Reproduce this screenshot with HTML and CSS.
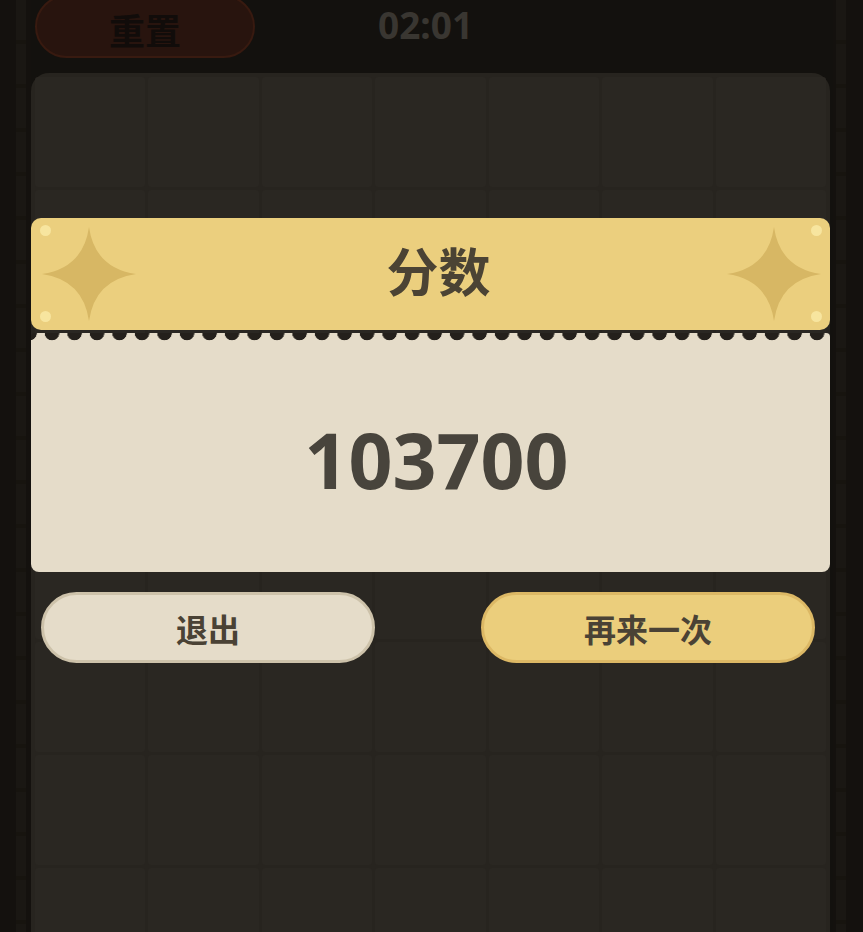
FILE: index.html
```html
<!DOCTYPE html>
<html lang="zh-CN">
<head>
<meta charset="utf-8">
<title>分数</title>
<link rel="stylesheet" href="styles.css">
</head>
<body>
<div class="screen">
  <div class="rail rail-left"><div class="track"></div></div>

  <main class="main">
    <header class="topbar">
      <button class="reset-btn">重置</button>
      <div class="timer">02:01</div>
    </header>

    <section class="board">
      <div class="cell"></div><div class="cell"></div><div class="cell"></div><div class="cell"></div><div class="cell"></div><div class="cell"></div><div class="cell"></div>
      <div class="cell"></div><div class="cell"></div><div class="cell"></div><div class="cell"></div><div class="cell"></div><div class="cell"></div><div class="cell"></div>
      <div class="cell"></div><div class="cell"></div><div class="cell"></div><div class="cell"></div><div class="cell"></div><div class="cell"></div><div class="cell"></div>
      <div class="cell"></div><div class="cell"></div><div class="cell"></div><div class="cell"></div><div class="cell"></div><div class="cell"></div><div class="cell"></div>
      <div class="cell"></div><div class="cell"></div><div class="cell"></div><div class="cell"></div><div class="cell"></div><div class="cell"></div><div class="cell"></div>
      <div class="cell"></div><div class="cell"></div><div class="cell"></div><div class="cell"></div><div class="cell"></div><div class="cell"></div><div class="cell"></div>
      <div class="cell"></div><div class="cell"></div><div class="cell"></div><div class="cell"></div><div class="cell"></div><div class="cell"></div><div class="cell"></div>
      <div class="cell"></div><div class="cell"></div><div class="cell"></div><div class="cell"></div><div class="cell"></div><div class="cell"></div><div class="cell"></div>
    </section>

    <!-- game-over dialog over the board -->
    <div class="score-modal">
      <div class="score-head">
        <span class="rivet rivet-tl"></span>
        <span class="rivet rivet-bl"></span>
        <span class="rivet rivet-tr"></span>
        <span class="rivet rivet-br"></span>
        <svg class="sparkle" viewBox="0 0 100 100" aria-hidden="true">
          <path d="M50 2 Q56 44 98 50 Q56 56 50 98 Q44 56 2 50 Q44 44 50 2Z"/>
        </svg>
        <h1 class="score-title">分数</h1>
        <svg class="sparkle" viewBox="0 0 100 100" aria-hidden="true">
          <path d="M50 2 Q56 44 98 50 Q56 56 50 98 Q44 56 2 50 Q44 44 50 2Z"/>
        </svg>
      </div>
      <div class="score-body">
        <div class="score-value">103700</div>
      </div>
      <div class="actions">
        <button class="pill pill-cream">退出</button>
        <button class="pill pill-gold">再来一次</button>
      </div>
    </div>
  </main>

  <div class="rail rail-right"><div class="track"></div></div>
</div>
</body>
</html>
```

FILE: styles.css
```css
* {
  box-sizing: border-box;
}

html, body {
  margin: 0;
  padding: 0;
  height: 932px;
  overflow: hidden;
  background: #13110e;
  font-family: "Noto Sans", "Noto Sans CJK SC", sans-serif;
}

.screen {
  display: flex;
  height: 932px;
}

/* side rails */
.rail {
  flex: 0 0 auto;
  background: #14110e;
  display: flex;
}

.rail-left {
  width: 31px;
  justify-content: flex-end;
  padding-right: 5px;
}

.rail-right {
  width: 30px;
  padding-left: 3px;
}

.track {
  width: 10px;
  background: repeating-linear-gradient(180deg, #1a1713 0 40px, #17140f 40px 44px);
}

/* middle column */
.main {
  position: relative;
  width: 802px;
  flex: 0 0 auto;
}

.topbar {
  height: 73px;
  display: flex;
  align-items: flex-start;
}

.reset-btn {
  margin: -5px 0 0 4px;
  width: 220px;
  height: 63px;
  border-radius: 32px;
  background: #28140e;
  border: 2px solid #381a10;
  color: #110c0a;
  font: 700 36px "Noto Sans CJK SC", sans-serif;
  line-height: 1;
  padding: 4px 0 0;
}

.timer {
  margin: 6px 0 0 123px;
  color: #393631;
  font: 700 37px "Noto Sans", sans-serif;
  line-height: 37px;
}

.board {
  width: 799px;
  border-radius: 18px;
  background: #27241f;
  padding: 4px;
  display: grid;
  grid-template-columns: repeat(7, 1fr);
  grid-auto-rows: 110px;
  gap: 3px;
}

.cell {
  background: #2a2722;
  border-radius: 3px;
}

/* dialog */
.score-modal {
  position: absolute;
  left: 0;
  top: 218px;
  width: 799px;
}

.score-head {
  position: relative;
  height: 112px;
  background: #ebcf7e;
  border-radius: 10px;
  display: flex;
  align-items: center;
  justify-content: space-between;
  padding: 0 7px 0 9px;
}

.sparkle {
  width: 98px;
  height: 98px;
  fill: #d7b764;
}

.score-title {
  margin: -8px 0 0 14px;
  color: #4b4334;
  font: 700 52px "Noto Sans CJK SC", sans-serif;
  line-height: 1;
}

.rivet {
  position: absolute;
  width: 11px;
  height: 11px;
  border-radius: 50%;
  background: #f7e59f;
}

.rivet-tl { left: 9px; top: 7px; }
.rivet-bl { left: 9px; bottom: 8px; }
.rivet-tr { right: 8px; top: 7px; }
.rivet-br { right: 8px; bottom: 8px; }

.score-body {
  margin-top: 3px;
  height: 239px;
  border-radius: 4px 4px 8px 8px;
  background:
    radial-gradient(circle at 11px 0, #24201b 7px, rgba(36, 32, 27, 0) 7.6px) 10px 0 / 22.5px 10px repeat-x,
    #e5dcc9;
  display: flex;
  align-items: center;
  justify-content: center;
}

.score-value {
  color: #48443c;
  font: 700 77px "Noto Sans", sans-serif;
  line-height: 1;
  padding: 14px 0 0 12px;
}

.actions {
  margin-top: 20px;
  display: flex;
  justify-content: space-between;
  padding: 0 15px 0 10px;
}

.pill {
  width: 334px;
  height: 71px;
  border-radius: 36px;
  border: 3px solid;
  font: 700 32px "Noto Sans CJK SC", sans-serif;
  color: #4a4235;
  line-height: 1;
  padding: 0;
}

.pill-cream {
  background: #e5dcc9;
  border-color: #cdc2aa;
}

.pill-gold {
  background: #ebce7c;
  border-color: #dcb865;
}
```
